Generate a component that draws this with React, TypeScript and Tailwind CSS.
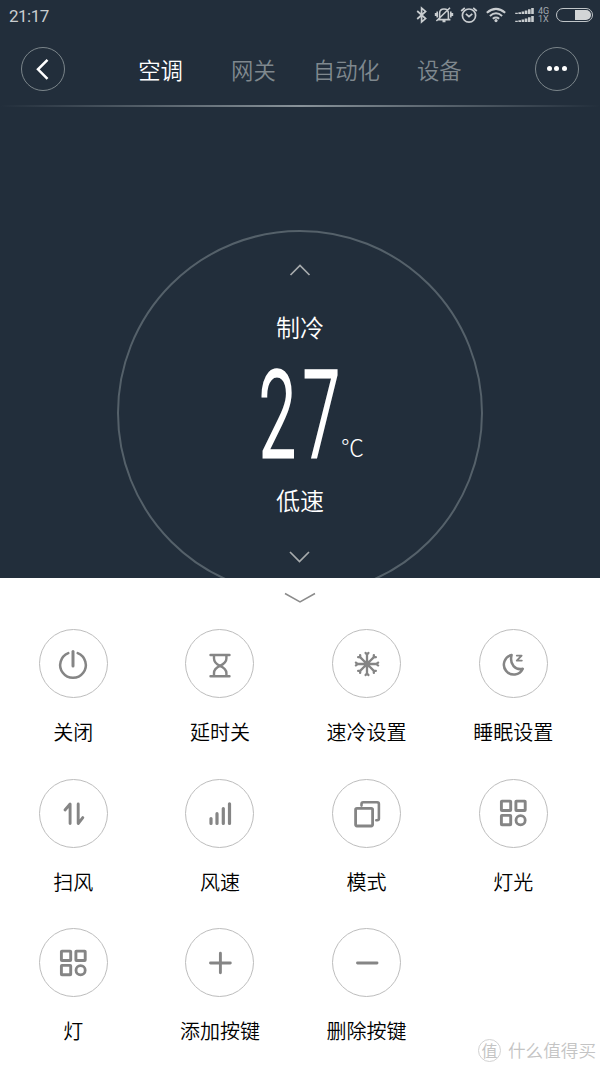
import React from 'react';

interface ActionItem {
    label: string;
    icon: React.ReactNode;
}

const PowerIcon = () => (
    <>
        <path d="M13.3 7.1A12.8 12.8 0 1 0 22.7 7.1" strokeWidth="2.5" />
        <path d="M18 5.5V20" strokeWidth="3" />
    </>
);

const HourglassIcon = () => (
    <path
        d="M8.5 9H27.5M8.5 30.3H27.5M12 9V12.5C12 16.5 14.5 18.2 18 19.8C21.5 21.4 24.4 23.5 24.4 27V30M24.4 9V12.5C24.4 16.5 21.5 18.2 18 19.8C14.5 21.4 12 23.5 12 27V30"
        strokeWidth="2.4"
    />
);

const SnowIcon = () => (
    <>
        {[0, 45, 90, 135, 180, 225, 270, 315].map((angle) => (
            <path
                key={angle}
                d="M18 18V8.6M16.6 6.9L18 8.6L19.4 6.9"
                strokeWidth="2.3"
                transform={`rotate(${angle} 18 18)`}
            />
        ))}
        <circle cx="18" cy="18" r="3.4" fill="currentColor" stroke="none" />
    </>
);

const MoonIcon = () => (
    <>
        <path d="M16.6 9A9.9 9.9 0 1 0 27.8 22.8C20.5 24.5 14.2 18.5 16.6 9Z" strokeWidth="2.5" />
        <path d="M21.8 9.6H26.6L21.8 14.6H26.8" strokeWidth="1.9" />
    </>
);

const SwingIcon = () => (
    <path d="M10 15L15.1 9V28.6M23.2 9V28.6L27.8 22.6" strokeWidth="2.9" />
);

const SpeedIcon = () => (
    <path d="M9 23.6V28.4M15 18.7V28.4M21.3 13.6V28.4M27.5 8.8V28.4" strokeWidth="3.2" />
);

const ModeIcon = () => (
    <>
        <rect x="6.6" y="13.4" width="17" height="17.6" rx="1.4" strokeWidth="2.8" />
        <path d="M12.5 10.6V9Q12.5 7.3 14.2 7.3H28.2Q29.9 7.3 29.9 9V23.6Q29.9 25.3 28.2 25.3H27.3" strokeWidth="2.6" />
    </>
);

const BlocksIcon = () => (
    <>
        <rect x="6.4" y="6.1" width="9.3" height="9.4" rx="0.5" strokeWidth="2.9" />
        <rect x="20.9" y="6.1" width="9.3" height="9.4" rx="0.5" strokeWidth="2.9" />
        <rect x="6.4" y="20.4" width="9.3" height="9.4" rx="0.5" strokeWidth="2.9" />
        <circle cx="25.6" cy="25.2" r="4.6" strokeWidth="2.8" />
    </>
);

const PlusIcon = () => <path d="M8.5 18H28.3M18.4 8.2V27.8" strokeWidth="2.9" />;

const MinusIcon = () => <path d="M8.5 18H28" strokeWidth="2.9" />;

const actions: ActionItem[] = [
    { label: '关闭', icon: <PowerIcon /> },
    { label: '延时关', icon: <HourglassIcon /> },
    { label: '速冷设置', icon: <SnowIcon /> },
    { label: '睡眠设置', icon: <MoonIcon /> },
    { label: '扫风', icon: <SwingIcon /> },
    { label: '风速', icon: <SpeedIcon /> },
    { label: '模式', icon: <ModeIcon /> },
    { label: '灯光', icon: <BlocksIcon /> },
    { label: '灯', icon: <BlocksIcon /> },
    { label: '添加按键', icon: <PlusIcon /> },
    { label: '删除按键', icon: <MinusIcon /> },
];

const tabs = ['空调', '网关', '自动化', '设备'];

const StatusBar = () => (
    <div className="flex h-8 shrink-0 items-center justify-between pl-[9px] pr-[7px] text-[#c9cdd0]">
        <span className="font-[Roboto,sans-serif] text-[17px] leading-8 tracking-[-0.5px]">21:17</span>
        <div className="flex h-8 items-start pt-[6px]">
            <svg width="12" height="18" viewBox="0 0 12 18" fill="none" stroke="currentColor" strokeWidth="1.7">
                <path d="M1.2 5L9.6 12.6L5.6 16V2L9.6 5.4L1.2 13" />
            </svg>
            <svg className="ml-[6px]" width="20" height="18" viewBox="0 0 20 18" fill="none" stroke="currentColor" strokeWidth="1.6">
                <path d="M3.6 13.6H16.4M5.6 13V7.5Q5.6 3 10 3Q14.4 3 14.4 7.5V13M8.5 15.4H11.5M3.2 5.5V11.5M1.6 7V10M16.8 5.5V11.5M18.4 7V10M2.4 15L16 1.8" />
            </svg>
            <svg className="ml-[6px]" width="18" height="18" viewBox="0 0 18 18" fill="none" stroke="currentColor" strokeWidth="1.7">
                <circle cx="9" cy="9.6" r="6.6" />
                <path d="M5.9 7.8L9 10.6L12.3 7.8M1.2 5L4.8 1.8M16.8 5L13.2 1.8" />
            </svg>
            <svg className="ml-[8px]" width="20" height="18" viewBox="0 0 20 18" fill="none" stroke="currentColor" strokeWidth="2">
                <path d="M0.8 6.8Q10 -1 19.2 6.8M3.9 9.9Q10 4.6 16.1 9.9M6.8 12.8Q10 10.3 13.2 12.8" />
                <circle cx="10" cy="14.6" r="1.6" fill="currentColor" stroke="none" />
            </svg>
            <svg className="ml-[9px]" width="20" height="18" viewBox="0 0 20 18" fill="none" stroke="currentColor" strokeWidth="2.6">
                <path d="M1.5 8V6.8M4.7 8V6.2M7.9 8V5.5M11.1 8V4.4M14.3 8V3.2M17.5 8V2M1.5 16V14.8M4.7 16V14.2M7.9 16V13.5M11.1 16V12.4M14.3 16V11.2M17.5 16V10" />
            </svg>
            <div className="ml-[3px] mt-px flex w-[11px] flex-col font-[Roboto,sans-serif] text-[9px] leading-[8px] text-[#a2a9af]">
                <span>4G</span>
                <span>1X</span>
            </div>
            <div className="ml-[7px] mt-[2px] flex h-[14px] w-[37px] justify-end rounded-full border border-[#c0c5c8] p-px">
                <div className="h-full w-4 rounded-r-full bg-[#d2d5d6]" />
            </div>
        </div>
    </div>
);

const Header = () => (
    <div className="flex h-[73px] shrink-0 items-center justify-between px-[21px]">
        <button className="flex size-[44px] items-center justify-center rounded-full border border-[#7b858a] text-white">
            <svg width="14" height="22" viewBox="0 0 14 22" fill="none" stroke="currentColor" strokeWidth="2.5">
                <path d="M11.5 1.8L2 11.3L11.5 20.8" />
            </svg>
        </button>
        <div className="flex gap-[48px] text-[22.4px] font-[350] leading-8 text-[#7f888e]">
            {tabs.map((tab, index) => (
                <span key={tab} className={index === 0 ? 'text-white' : index === 2 ? '-mx-[11px]' : ''}>
                    {tab}
                </span>
            ))}
        </div>
        <button className="flex size-[44px] items-center justify-center gap-[2.5px] rounded-full border border-[#7b858a]">
            <i className="size-[5px] rounded-full bg-white" />
            <i className="size-[5px] rounded-full bg-white" />
            <i className="size-[5px] rounded-full bg-white" />
        </button>
    </div>
);

const Dial = () => (
    <div className="mx-auto mt-[123px] flex h-[366px] w-[366px] shrink-0 flex-col items-center rounded-full border-2 border-[#55616a] text-white">
        <svg className="mt-[31px] shrink-0" width="22" height="14" viewBox="0 0 22 14" fill="none" stroke="#a7abad" strokeWidth="1.7">
            <path d="M1.5 12L11 2.5L20.5 12" />
        </svg>
        <span className="mt-[32px] text-[24px] font-[350] leading-9">制冷</span>
        <div className="relative mt-[2px] flex h-[134px] w-20 items-center justify-center">
            <span className="-mr-[13px] origin-center translate-x-[-3px] translate-y-[2px] scale-x-[0.55] font-[Roboto,sans-serif] text-[121px] font-light leading-[134px] tracking-[13px] [-webkit-text-stroke:3.2px_white]">27</span>
            <span className="absolute left-[81px] top-[83px] text-[23px] font-light leading-8">℃</span>
        </div>
        <span className="mt-px text-[24px] font-[350] leading-9">低速</span>
        <svg className="mt-[32px] shrink-0" width="22" height="14" viewBox="0 0 22 14" fill="none" stroke="#a7abad" strokeWidth="1.7">
            <path d="M1 2L10.5 11.5L20 2" />
        </svg>
    </div>
);

const ActionButton: React.FC<ActionItem> = ({ label, icon }) => (
    <div className="flex h-[149.5px] flex-col items-center">
        <button className="flex size-[69px] items-center justify-center rounded-full border border-[#bdbdbd] text-[#858585]">
            <svg
                width="36"
                height="36"
                viewBox="0 0 36 36"
                fill="none"
                stroke="currentColor"
                strokeLinecap="round"
                strokeLinejoin="round"
            >
                {icon}
            </svg>
        </button>
        <span className="mt-[20px] whitespace-nowrap text-[20px] font-[350] leading-7 text-black">{label}</span>
    </div>
);

const App: React.FC = () => {
    return (
        <div className="relative h-[1067px] w-[600px] overflow-hidden bg-white font-['Noto_Sans_CJK_SC',sans-serif]">
            <section className="flex h-[578px] flex-col overflow-hidden bg-[#222e3b]">
                <StatusBar />
                <Header />
                <div className="h-[2px] shrink-0 bg-linear-to-r from-transparent via-[#89939a] to-transparent" />
                <Dial />
            </section>
            <section>
                <div className="flex h-[51.3px] justify-center pt-[13px]">
                    <svg width="32" height="14" viewBox="0 0 32 14" fill="none" stroke="#8b8b8b" strokeWidth="1.5">
                        <path d="M1 2.5L16 10.8L31 2.5" />
                    </svg>
                </div>
                <div className="grid w-[586.5px] grid-cols-4">
                    {actions.map((action) => (
                        <ActionButton key={action.label} {...action} />
                    ))}
                </div>
            </section>
            <div className="absolute bottom-[5px] right-[4px] flex items-center gap-[7px] text-[#c4c4c4]">
                <span className="flex size-[23px] items-center justify-center rounded-full border border-[#d2d2d2] text-[16px] leading-none">值</span>
                <span className="text-[17.6px] font-[350] leading-6">什么值得买</span>
            </div>
        </div>
    );
};

export default App;
